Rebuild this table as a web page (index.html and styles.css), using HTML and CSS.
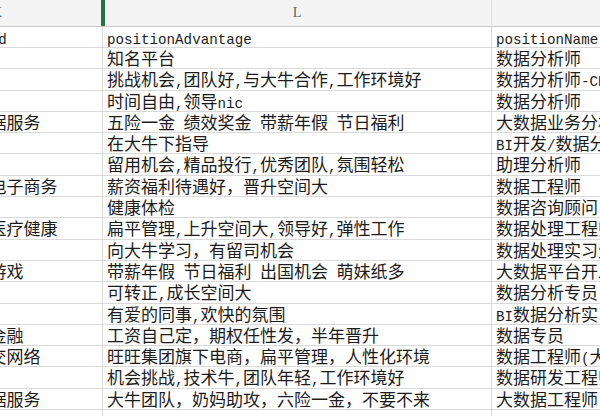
FILE: index.html
```html
<!DOCTYPE html>
<html lang="zh-CN">
<head>
<meta charset="utf-8">
<title>Sheet</title>
<link rel="stylesheet" href="styles.css">
</head>
<body>
<div class="sheet">
  <div class="ch">K</div>
  <div class="ch sel">L</div>
  <div class="ch">M</div>

  <div class="c"><span class="en">industryField</span></div>
  <div class="c"><span class="en">positionAdvantage</span></div>
  <div class="c"><span class="en">positionName</span></div>

  <div class="c"></div>
  <div class="c">知名平台</div>
  <div class="c">数据分析师</div>

  <div class="c"></div>
  <div class="c">挑战机会<span class="en">,</span>团队好<span class="en">,</span>与大牛合作<span class="en">,</span>工作环境好</div>
  <div class="c">数据分析师<span class="en">-CBC</span></div>

  <div class="c"></div>
  <div class="c">时间自由<span class="en">,</span>领导<span class="en">nic</span></div>
  <div class="c">数据分析师</div>

  <div class="c">企业服务<span class="en">,</span>数据服务</div>
  <div class="c">五险一金<span class="en"> </span>绩效奖金<span class="en"> </span>带薪年假<span class="en"> </span>节日福利</div>
  <div class="c">大数据业务分析师</div>

  <div class="c"></div>
  <div class="c">在大牛下指导</div>
  <div class="c"><span class="en">BI</span>开发<span class="en">/</span>数据分析师</div>

  <div class="c"></div>
  <div class="c">留用机会<span class="en">,</span>精品投行<span class="en">,</span>优秀团队<span class="en">,</span>氛围轻松</div>
  <div class="c">助理分析师</div>

  <div class="c">移动互联网<span class="en">,</span>电子商务</div>
  <div class="c">薪资福利待遇好，晋升空间大</div>
  <div class="c">数据工程师</div>

  <div class="c"></div>
  <div class="c">健康体检</div>
  <div class="c">数据咨询顾问</div>

  <div class="c">移动互联网<span class="en">,</span>医疗健康</div>
  <div class="c">扁平管理<span class="en">,</span>上升空间大<span class="en">,</span>领导好<span class="en">,</span>弹性工作</div>
  <div class="c">数据处理工程师</div>

  <div class="c"></div>
  <div class="c">向大牛学习，有留司机会</div>
  <div class="c">数据处理实习生</div>

  <div class="c">移动互联网<span class="en">,</span>游戏</div>
  <div class="c">带薪年假<span class="en"> </span>节日福利<span class="en"> </span>出国机会<span class="en"> </span>萌妹纸多</div>
  <div class="c">大数据平台开发</div>

  <div class="c"></div>
  <div class="c">可转正<span class="en">,</span>成长空间大</div>
  <div class="c">数据分析专员</div>

  <div class="c"></div>
  <div class="c">有爱的同事<span class="en">,</span>欢快的氛围</div>
  <div class="c"><span class="en">BI</span>数据分析实习生</div>

  <div class="c">移动互联网<span class="en">,</span>金融</div>
  <div class="c">工资自己定，期权任性发，半年晋升</div>
  <div class="c">数据专员</div>

  <div class="c">电子商务<span class="en">,</span>社交网络</div>
  <div class="c">旺旺集团旗下电商，扁平管理，人性化环境</div>
  <div class="c">数据工程师<span class="en">(</span>大数据<span class="en">)</span></div>

  <div class="c"></div>
  <div class="c">机会挑战<span class="en">,</span>技术牛<span class="en">,</span>团队年轻<span class="en">,</span>工作环境好</div>
  <div class="c">数据研发工程师</div>

  <div class="c">企业服务<span class="en">,</span>数据服务</div>
  <div class="c">大牛团队，奶妈助攻，六险一金，不要不来</div>
  <div class="c">大数据工程师</div>

  <div class="c"></div>
  <div class="c"></div>
  <div class="c"></div>
</div>
</body>
</html>
```

FILE: styles.css
```css
html, body {
  margin: 0;
  padding: 0;
  background: #ffffff;
  overflow: hidden;
  width: 600px;
  height: 416px;
}

.sheet {
  display: grid;
  grid-template-columns: 211px 389px 300px;
  grid-template-rows: 27px 21px repeat(18, 21.3px);
  margin-left: -108px;
  font-family: "Noto Sans CJK SC", "Liberation Mono", sans-serif;
  font-size: 17px;
  color: #1c1c1c;
}

.ch {
  position: relative;
  box-sizing: border-box;
  background: #f4f4f4;
  border-right: 1px solid #dedede;
  border-bottom: 1px solid #c9c9c9;
  display: flex;
  align-items: center;
  justify-content: center;
  font-family: "Liberation Serif", serif;
  font-size: 14px;
  color: #5f5f5f;
}

.ch.sel::before {
  content: "";
  position: absolute;
  left: -2px;
  top: 0;
  bottom: 0;
  width: 4px;
  background: #22744a;
}

.c {
  box-sizing: border-box;
  border-right: 1px solid #d9d9d9;
  border-bottom: 1px solid #d9d9d9;
  padding-left: 4px;
  white-space: pre;
  overflow: hidden;
  line-height: 20px;
}

.en {
  font-family: "Liberation Mono", monospace;
  font-size: 14.2px;
  white-space: pre;
}
```
